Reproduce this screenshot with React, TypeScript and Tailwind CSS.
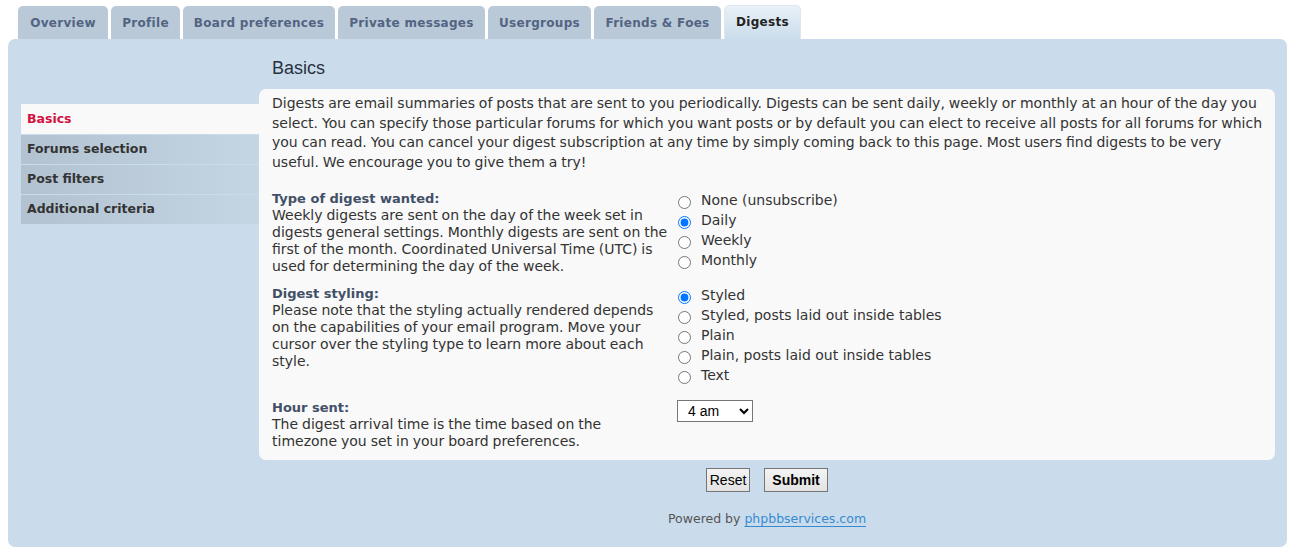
import { Fragment, useState } from "react";

const tabs = [
  { label: "Overview", w: "w-[90px]" },
  { label: "Profile", w: "w-[69px]" },
  { label: "Board preferences", w: "w-[152px]" },
  { label: "Private messages", w: "w-[147px]" },
  { label: "Usergroups", w: "w-[103px]" },
  { label: "Friends & Foes", w: "w-[127px]" },
];

const navItems = ["Forums selection", "Post filters", "Additional criteria"];

const digestTypes = ["None (unsubscribe)", "Daily", "Weekly", "Monthly"];

const stylings = [
  "Styled",
  "Styled, posts laid out inside tables",
  "Plain",
  "Plain, posts laid out inside tables",
  "Text",
];

const intro = [
  "Digests are email summaries of posts that are sent to you periodically. Digests can be sent daily, weekly or monthly at an hour of the day you",
  "select. You can specify those particular forums for which you want posts or by default you can elect to receive all posts for all forums for which",
  "you can read. You can cancel your digest subscription at any time by simply coming back to this page. Most users find digests to be very",
  "useful. We encourage you to give them a try!",
];

const rows = [
  {
    title: "Type of digest wanted:",
    lines: [
      "Weekly digests are sent on the day of the week set in",
      "digests general settings. Monthly digests are sent on the",
      "first of the month. Coordinated Universal Time (UTC) is",
      "used for determining the day of the week.",
    ],
  },
  {
    title: "Digest styling:",
    lines: [
      "Please note that the styling actually rendered depends",
      "on the capabilities of your email program. Move your",
      "cursor over the styling type to learn more about each",
      "style.",
    ],
  },
  {
    title: "Hour sent:",
    lines: [
      "The digest arrival time is the time based on the",
      "timezone you set in your board preferences.",
    ],
  },
];

function Lines({ lines }: { lines: string[] }) {
  return (
    <>
      {lines.map((line, i) => (
        <Fragment key={i}>
          {line}
          {i < lines.length - 1 && <br />}
        </Fragment>
      ))}
    </>
  );
}

type RadioGroupProps = {
  name: string;
  options: string[];
  value: string;
  onChange: (v: string) => void;
};

function RadioGroup({ name, options, value, onChange }: RadioGroupProps) {
  return (
    <div className="flex flex-col">
      {options.map((opt) => (
        <label key={opt} className="flex h-[20px] items-center">
          <input
            type="radio"
            name={name}
            checked={value === opt}
            onChange={() => onChange(opt)}
            className="mt-[4px] mr-[10px] ml-[1px] h-[13px] w-[13px]"
          />
          <span>{opt}</span>
        </label>
      ))}
    </div>
  );
}

function FieldLabel({ row }: { row: (typeof rows)[number] }) {
  return (
    <div className="w-[397px] shrink-0 leading-[17px]">
      <div className="text-[13px] font-bold text-[#425067]">{row.title}</div>
      <div className="whitespace-nowrap [word-spacing:-0.5px]">
        <Lines lines={row.lines} />
      </div>
    </div>
  );
}

export default function App() {
  const [digestType, setDigestType] = useState("Daily");
  const [styling, setStyling] = useState("Styled");

  return (
    <div className="h-[552px] w-full bg-white font-['DejaVu_Sans',Verdana,sans-serif] text-[14px] text-[#333333]">
      {/* tabs */}
      <div className="flex items-end gap-[3px] pl-[18px] pt-[5px] tracking-[0.3px]">
        {tabs.map((tab) => (
          <div
            key={tab.label}
            className={`${tab.w} flex h-[33px] items-center justify-center rounded-t-[5px] bg-[#b9c9d8] pt-[1px] text-[12px] font-bold text-[#536482]`}
          >
            {tab.label}
          </div>
        ))}
        <div className="flex h-[34px] w-[77px] items-start justify-center rounded-t-[5px] border border-b-0 border-[#dfe8f0] bg-gradient-to-b from-[#eaf1f7] to-[#cadceb] pt-[7px] text-[12px] font-bold text-[#222222]">
          Digests
        </div>
      </div>

      {/* panel */}
      <div className="mx-[8px] flex h-[508px] rounded-[7px] bg-[#cadceb] px-[13px]">
        <nav className="w-[238px] shrink-0 pt-[65px] text-[12.5px]">
          <div className="flex h-[30px] items-center bg-[#f9f9f9] pl-[6px] font-bold text-[#d31141]">
            Basics
          </div>
          {navItems.map((item) => (
            <div
              key={item}
              className="flex h-[30px] items-center border-t border-[#cadceb] bg-gradient-to-r from-[#b2c2d1] to-[#c4d5e4] pl-[6px] font-bold text-[#333333]"
            >
              {item}
            </div>
          ))}
        </nav>

        <main className="flex-1 pt-[16px]">
          <h2 className="mb-[8px] px-[13px] font-['Liberation_Sans',Arial,sans-serif] text-[18px] leading-[26px] text-[#28313f]">
            Basics
          </h2>

          <div className="rounded-[7px] bg-[#f9f9f9] px-[13px] pt-[5px] pb-[10px]">
            <p className="whitespace-nowrap leading-[19.5px] [word-spacing:-0.5px]">
              <Lines lines={intro} />
            </p>

            <div className="mt-[18px] flex">
              <FieldLabel row={rows[0]} />
              <div className="pl-[8px]">
                <RadioGroup
                  name="type"
                  options={digestTypes}
                  value={digestType}
                  onChange={setDigestType}
                />
              </div>
            </div>

            <div className="mt-[10px] flex">
              <FieldLabel row={rows[1]} />
              <div className="pl-[8px]">
                <RadioGroup
                  name="styling"
                  options={stylings}
                  value={styling}
                  onChange={setStyling}
                />
              </div>
            </div>

            <div className="mt-[14px] flex">
              <FieldLabel row={rows[2]} />
              <div className="pl-[8px] pt-[1px]">
                <select
                  defaultValue="4"
                  className="h-[22px] w-[76px] border border-[#767676] bg-white pl-[6px] font-['Liberation_Sans',Arial,sans-serif] text-[14px] text-black"
                >
                  {Array.from({ length: 24 }, (_, i) => (
                    <option key={i} value={String(i)}>
                      {i === 0 ? "12 am" : i < 12 ? `${i} am` : i === 12 ? "12 pm" : `${i - 12} pm`}
                    </option>
                  ))}
                </select>
              </div>
            </div>
          </div>

          <div className="mt-[8px] flex justify-center gap-[14px] font-['Liberation_Sans',Arial,sans-serif] text-[14px] text-black">
            <button
              type="reset"
              className="h-[24px] w-[44px] border border-[#767676] bg-gradient-to-b from-[#f4f4f4] to-[#e2e2e2]"
            >
              Reset
            </button>
            <button
              type="submit"
              className="h-[24px] w-[64px] border border-[#767676] bg-gradient-to-b from-[#f4f4f4] to-[#e2e2e2] font-bold"
            >
              Submit
            </button>
          </div>

          <p className="mt-[18px] text-center text-[12.5px] text-[#555555]">
            Powered by{" "}
            <a href="#" className="text-[#368ad2] underline decoration-[#368ad2] underline-offset-[3px]">
              phpbbservices.com
            </a>
          </p>
        </main>
      </div>
    </div>
  );
}
